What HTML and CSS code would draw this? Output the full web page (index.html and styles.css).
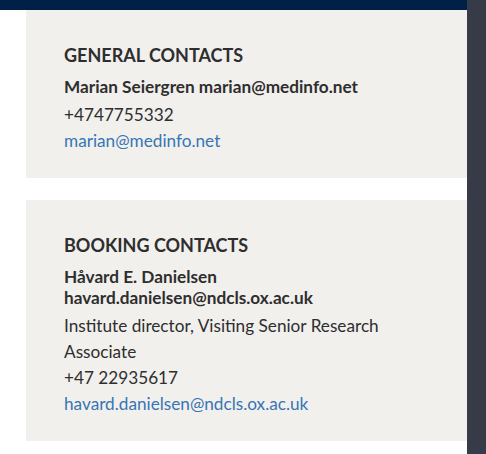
FILE: index.html
```html
<!DOCTYPE html>
<html>
<head>
<meta charset="utf-8">
<link rel="stylesheet" href="styles.css">
</head>
<body>
<div class="page">
  <div class="main">
    <div class="topbar"></div>
    <section class="card card-general">
      <h2 class="card-title">GENERAL CONTACTS</h2>
      <p class="contact-name">Marian Seiergren marian@medinfo.net</p>
      <p class="contact-line">+4747755332</p>
      <a class="contact-link" href="#">marian@medinfo.net</a>
    </section>
    <section class="card card-booking">
      <h2 class="card-title">BOOKING CONTACTS</h2>
      <p class="contact-name">Håvard E. Danielsen<br>havard.danielsen@ndcls.ox.ac.uk</p>
      <p class="contact-line">Institute director, Visiting Senior Research Associate</p>
      <p class="contact-line">+47 22935617</p>
      <a class="contact-link" href="#">havard.danielsen@ndcls.ox.ac.uk</a>
    </section>
  </div>
  <div class="sidebar"></div>
</div>
</body>
</html>
```

FILE: styles.css
```css
html, body {
  margin: 0;
  padding: 0;
  background: #ffffff;
}
body {
  font-family: Lato, "Liberation Sans", sans-serif;
  color: #2e2e2e;
}
.page {
  display: flex;
  min-height: 454px;
}
.main {
  flex: 1;
  min-width: 0;
}
.sidebar {
  width: 19px;
  background: #363b47;
  flex: none;
}
.topbar {
  height: 10px;
  background: #002048;
}
.card {
  margin-left: 26px;
  background: #f1f0ed;
  padding: 34px 30px 24px 38px;
}
.card-booking {
  margin-top: 22px;
}
.card-title {
  margin: 0 0 10px;
  font-size: 18px;
  line-height: 22px;
  font-weight: 700;
  color: #2e2e2e;
}
.contact-name {
  margin: 0 0 5px;
  font-size: 17.2px;
  line-height: 21px;
  font-weight: 700;
}
.contact-line {
  margin: 0;
  font-size: 17.2px;
  line-height: 26px;
}
.contact-link {
  display: block;
  font-size: 17.2px;
  line-height: 26px;
  color: #3775b4;
  text-decoration: none;
}
```
